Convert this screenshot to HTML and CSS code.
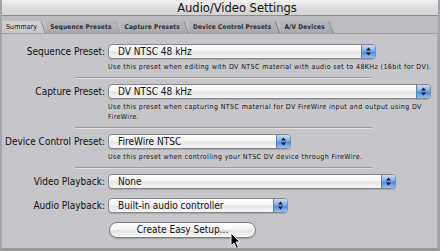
FILE: index.html
```html
<!DOCTYPE html>
<html>
<head>
<meta charset="utf-8">
<link rel="stylesheet" href="styles.css">
</head>
<body>
<div class="window">
  <div class="titlebar"><span class="title">Audio/Video Settings</span></div>
  <div class="tabs">
    <div class="tab active">Summary</div>
    <div class="tab">Sequence Presets</div>
    <div class="tab">Capture Presets</div>
    <div class="tab">Device Control Presets</div>
    <div class="tab">A/V Devices</div>
  </div>
  <div class="panel">
    <div class="row r-seq">
      <span class="label">Sequence Preset:</span>
      <div class="popup w-seq"><span class="ptext">DV NTSC 48 kHz</span><span class="arrow"><svg width="7" height="9" viewBox="0 0 7 9"><path d="M3.5 0.5 L6 3.5 L1 3.5 Z M3.5 8.5 L6 5.5 L1 5.5 Z" fill="#1a1a1a"/></svg></span></div>
    </div>
    <p class="desc">Use this preset when editing with DV NTSC material with audio set to 48KHz (16bit for DV).</p>
    <div class="sep"></div>

    <div class="row r-cap">
      <span class="label">Capture Preset:</span>
      <div class="popup w-cap"><span class="ptext">DV NTSC 48 kHz</span><span class="arrow"><svg width="7" height="9" viewBox="0 0 7 9"><path d="M3.5 0.5 L6 3.5 L1 3.5 Z M3.5 8.5 L6 5.5 L1 5.5 Z" fill="#1a1a1a"/></svg></span></div>
    </div>
    <p class="desc">Use this preset when capturing NTSC material for DV FireWire input and output using DV<br>FireWire.</p>
    <div class="sep"></div>

    <div class="row r-dev">
      <span class="label">Device Control Preset:</span>
      <div class="popup w-dev"><span class="ptext">FireWire NTSC</span><span class="arrow"><svg width="7" height="9" viewBox="0 0 7 9"><path d="M3.5 0.5 L6 3.5 L1 3.5 Z M3.5 8.5 L6 5.5 L1 5.5 Z" fill="#1a1a1a"/></svg></span></div>
    </div>
    <p class="desc">Use this preset when controlling your NTSC DV device through FireWire.</p>
    <div class="sep"></div>

    <div class="row r-vid">
      <span class="label">Video Playback:</span>
      <div class="popup w-vid"><span class="ptext">None</span><span class="arrow"><svg width="7" height="9" viewBox="0 0 7 9"><path d="M3.5 0.5 L6 3.5 L1 3.5 Z M3.5 8.5 L6 5.5 L1 5.5 Z" fill="#1a1a1a"/></svg></span></div>
    </div>
    <div class="row r-aud">
      <span class="label">Audio Playback:</span>
      <div class="popup w-aud"><span class="ptext">Built-in audio controller</span><span class="arrow"><svg width="7" height="9" viewBox="0 0 7 9"><path d="M3.5 0.5 L6 3.5 L1 3.5 Z M3.5 8.5 L6 5.5 L1 5.5 Z" fill="#1a1a1a"/></svg></span></div>
    </div>
    <div class="row r-btn">
      <span class="label"></span>
      <div class="button">Create Easy Setup...</div>
    </div>
  </div>
  <svg class="cursor" width="12" height="18" viewBox="0 0 12 18"><path d="M1 1 L1 14 L4 11 L6.5 16.5 L8.5 15.5 L6 10 L10 10 Z" fill="#000" stroke="#fff" stroke-width="1" stroke-linejoin="round"/></svg>
</div>
</body>
</html>
```

FILE: styles.css
```css
html, body {
  margin: 0;
  padding: 0;
  background: #9c9ca0;
}
.window {
  position: relative;
  width: 440px;
  height: 251px;
  box-sizing: border-box;
  background: #bdbdc1;
  border-left: 2px solid #a5a5a9;
  border-right: 2px solid #a4a4a8;
  border-bottom: 3px solid #9a9a9e;
  font-family: "DejaVu Sans Condensed", "DejaVu Sans", sans-serif;
  color: #111;
  overflow: hidden;
}
.titlebar {
  height: 15px;
  background: linear-gradient(#f2f2f2, #dcdcdc 55%, #d2d2d2);
  border-bottom: 1px solid #8e8e92;
  display: flex;
  align-items: center;
  justify-content: center;
  padding-left: 34px;
}
.title {
  font-family: "DejaVu Sans", sans-serif;
  font-size: 11.5px;
  color: #111;
}
.tabs {
  display: flex;
  height: 12px;
  margin-top: 5px;
  padding-left: 0;
  border-bottom: 1px solid #a0a0a4;
}
.tab {
  position: relative;
  font-size: 6.5px;
  font-weight: bold;
  letter-spacing: 0.15px;
  color: #2a2a2a;
  padding: 0 9px 0 4px;
  line-height: 12px;
  white-space: nowrap;
  background: linear-gradient(#b9b9bd, #a9a9ad);
  clip-path: polygon(0 0, calc(100% - 5px) 0, 100% 100%, 0 100%);
}
.tab::after {
  content: "";
  position: absolute;
  right: 2px;
  top: 0;
  width: 1px;
  height: 13px;
  background: #77777b;
  transform: skewX(22deg);
}
.tab.active {
  background: linear-gradient(#d2d2d6, #c7c7cb);
  color: #111;
  font-size: 7px;
  font-weight: normal;
  letter-spacing: 0.1px;
}
.panel {
  background: #c6c6ca;
  height: 217px;
  box-sizing: border-box;
  padding-top: 10px;
  border-right: 1px solid #a6a6aa;
}
.row {
  display: flex;
  align-items: center;
  height: 15px;
}
.label {
  width: 103px;
  flex: none;
  text-align: right;
  font-size: 10px;
  white-space: nowrap;
  color: #111;
}
.popup {
  margin-left: 3px;
  height: 15px;
  box-sizing: border-box;
  border: 1px solid #85858a;
  border-radius: 4px;
  background: linear-gradient(#ffffff, #f3f3f3 45%, #e4e4e4 55%, #f6f6f6);
  display: flex;
  align-items: center;
  overflow: hidden;
  box-shadow: 0 1px 1px rgba(0,0,0,0.15);
}
.ptext {
  flex: 1;
  padding-left: 9px;
  font-size: 10px;
  color: #111;
  white-space: nowrap;
}
.arrow {
  width: 13px;
  height: 100%;
  flex: none;
  display: flex;
  align-items: center;
  justify-content: center;
  border-left: 1px solid #5d7fb2;
  background: linear-gradient(#c7dcf7, #7eaef0 45%, #4d8ae0 55%, #8fc0f6);
}
.w-seq { width: 268px; }
.w-cap { width: 323px; }
.w-dev { width: 183px; }
.w-vid { width: 288px; }
.w-aud { width: 180px; }
.desc {
  margin: 3px 0 0 106px;
  font-size: 7px;
  letter-spacing: 0.4px;
  line-height: 10px;
  white-space: nowrap;
  color: #111;
}
.sep {
  margin: 5px 0 5px 73px;
  width: 297px;
  height: 0;
  border-top: 1px solid #9d9da1;
  border-bottom: 1px solid #e2e2e6;
}
.r-aud { margin-top: 9px; }
.r-btn { margin-top: 9px; height: 16px; }
.button {
  margin-left: 4px;
  width: 147px;
  height: 16px;
  box-sizing: border-box;
  border: 1px solid #7c7c80;
  border-radius: 8px;
  background: linear-gradient(#ffffff, #f4f4f4 45%, #e2e2e2 55%, #f8f8f8);
  font-size: 10px;
  text-align: center;
  line-height: 14px;
  color: #111;
  box-shadow: 0 1px 1px rgba(0,0,0,0.2);
}
.cursor {
  position: absolute;
  left: 228px;
  top: 232px;
}
```
